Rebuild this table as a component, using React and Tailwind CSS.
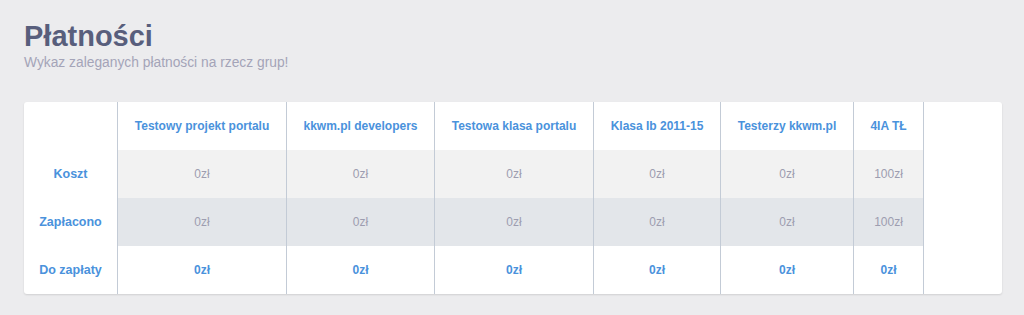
import React from "react";

const cols = [
  "Testowy projekt portalu",
  "kkwm.pl developers",
  "Testowa klasa portalu",
  "Klasa Ib 2011-15",
  "Testerzy kkwm.pl",
  "4IA TŁ",
];
const koszt = ["0zł", "0zł", "0zł", "0zł", "0zł", "100zł"];
const zapl = ["0zł", "0zł", "0zł", "0zł", "0zł", "100zł"];
const doz = ["0zł", "0zł", "0zł", "0zł", "0zł", "0zł"];

export default function App() {
  const cell = "h-[48px] flex items-center justify-center border-r border-[#c3cbd6]";
  return (
    <div className="min-h-[315px] w-[1024px] bg-[#ececee] pt-[19px]" style={{ fontFamily: '"Liberation Sans", Arial, sans-serif' }}>
      <div className="pl-6">
        <h1 className="text-[29px] leading-[34px] font-bold text-[#585e7c]">Płatności</h1>
        <p className="text-[13.8px] leading-[18px] mt-[1px] text-[#a4a4b8]">Wykaz zaleganych płatności na rzecz grup!</p>
      </div>
      <div className="ml-6 mt-[30px] w-[978px] bg-white rounded-[3px] shadow-[0_1px_2px_rgba(0,0,0,0.12)] overflow-hidden">
        <div className="grid grid-cols-[94px_169px_148px_159px_127px_133px_70px_1fr] text-[12px]">
          <div className={cell}></div>
          {cols.map((c) => (
            <div key={c} className={cell + " font-bold text-[#4a92dc]"}>{c}</div>
          ))}
          <div></div>

          <div className={cell + " font-bold text-[#4a92dc] text-[12.5px]"}>Koszt</div>
          {koszt.map((v, i) => (
            <div key={i} className={cell + " bg-[#f2f2f2] text-[#9d9db0]"}>{v}</div>
          ))}
          <div></div>

          <div className={cell + " font-bold text-[#4a92dc] text-[12.5px]"}>Zapłacono</div>
          {zapl.map((v, i) => (
            <div key={i} className={cell + " bg-[#e3e6ea] text-[#9d9db0]"}>{v}</div>
          ))}
          <div></div>

          <div className={cell + " font-bold text-[#4a92dc] text-[12.5px]"}>Do zapłaty</div>
          {doz.map((v, i) => (
            <div key={i} className={cell + " font-bold text-[#4a92dc]"}>{v}</div>
          ))}
          <div></div>
        </div>
      </div>
    </div>
  );
}
